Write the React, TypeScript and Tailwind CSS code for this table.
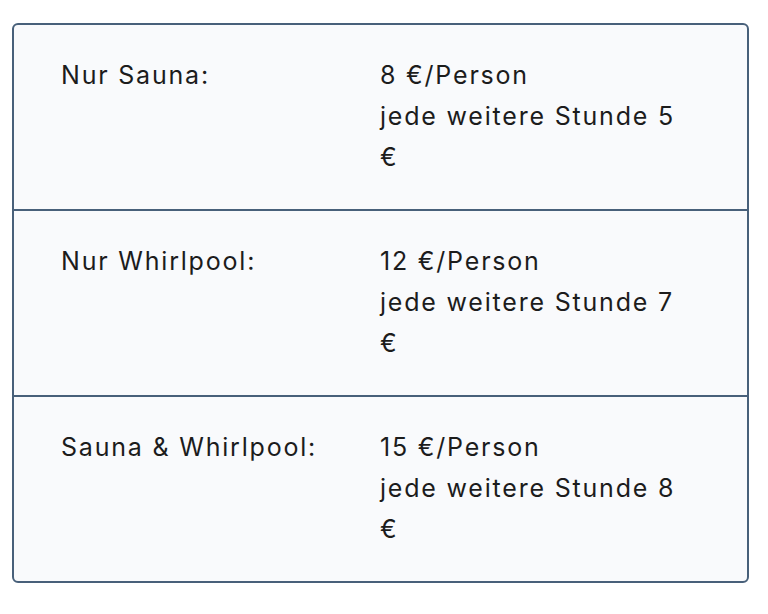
import React from 'react';

const prices = [
  { label: 'Nur Sauna:', price: '8 €/Person', extra: 'jede weitere Stunde 5 €' },
  { label: 'Nur Whirlpool:', price: '12 €/Person', extra: 'jede weitere Stunde 7 €' },
  { label: 'Sauna & Whirlpool:', price: '15 €/Person', extra: 'jede weitere Stunde 8 €' },
];

export default function App() {
  return (
    <div className="bg-white min-h-screen pt-[23px] px-3 font-['Inter',sans-serif] text-[#1c1c1c]">
      <div className="w-[737px] rounded-md border-2 border-[#48607a] bg-[#f9fafc] overflow-hidden">
        {prices.map((row, i) => (
          <div
            key={row.label}
            className={`flex pt-[30px] pb-[31px] pl-[47px] text-[25px] leading-[41px] tracking-[1.8px] ${i > 0 ? 'border-t-2 border-[#48607a]' : ''}`}
          >
            <div className="w-[319px] shrink-0">{row.label}</div>
            <div className="w-[310px]">
              <div>{row.price}</div>
              <div>{row.extra}</div>
            </div>
          </div>
        ))}
      </div>
    </div>
  );
}
